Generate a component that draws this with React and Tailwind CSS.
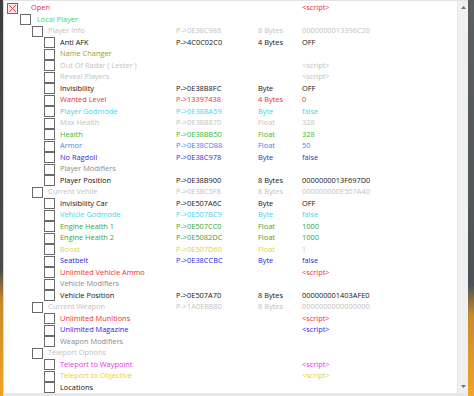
const RED = '#ee2b36'
const LIME = '#3fdc3f'
const FADE = '#c2c2c2'
const OLIVE = '#9c9c2a'
const CYAN = '#3fd6ee'
const GREEN = '#3ab83a'
const SKY = '#3a84ee'
const INDIGO = '#2f2fd0'
const MOD = '#8a8a8a'
const ENGINE = '#37a437'
const YELLOW = '#dcd43c'
const BLUE = '#2626e6'
const PINK = '#ee2cee'
const BLACK = '#141414'

// [level, label, color, address, type, value]
const rows = [
  [0, 'Open', RED, '', '', '<script>'],
  [1, 'Local Player', LIME],
  [2, 'Player Info', FADE, 'P->0E38C988', '8 Bytes', '0000000013396C20'],
  [3, 'Anti AFK', BLACK, 'P->4C0C02C0', '4 Bytes', 'OFF'],
  [3, 'Name Changer', OLIVE],
  [3, 'Out Of Radar ( Lester )', FADE, '', '', '<script>'],
  [3, 'Reveal Players', FADE, '', '', '<script>'],
  [3, 'Invisibility', BLACK, 'P->0E38B8FC', 'Byte', 'OFF'],
  [3, 'Wanted Level', RED, 'P->13397438', '4 Bytes', '0'],
  [3, 'Player Godmode', CYAN, 'P->0E38BA59', 'Byte', 'false'],
  [3, 'Max Health', FADE, 'P->0E38B870', 'Float', '328'],
  [3, 'Health', GREEN, 'P->0E38BB50', 'Float', '328'],
  [3, 'Armor', SKY, 'P->0E38CD88', 'Float', '50'],
  [3, 'No Ragdoll', INDIGO, 'P->0E38C978', 'Byte', 'false'],
  [3, 'Player Modifiers', MOD],
  [3, 'Player Position', BLACK, 'P->0E38B900', '8 Bytes', '0000000013F697D0'],
  [2, 'Current Vehile', FADE, 'P->0E38C5F8', '8 Bytes', '000000000E507A40'],
  [3, 'Invisibility Car', BLACK, 'P->0E507A6C', 'Byte', 'OFF'],
  [3, 'Vehicle Godmode', CYAN, 'P->0E507BC9', 'Byte', 'false'],
  [3, 'Engine Health 1', ENGINE, 'P->0E507CC0', 'Float', '1000'],
  [3, 'Engine Health 2', ENGINE, 'P->0E5082DC', 'Float', '1000'],
  [3, 'Boost', YELLOW, 'P->0E507D60', 'Float', '1'],
  [3, 'Seatbelt', BLUE, 'P->0E38CCBC', 'Byte', 'false'],
  [3, 'Unlimited Vehicle Ammo', RED, '', '', '<script>'],
  [3, 'Vehicle Modifiers', MOD],
  [3, 'Vehicle Position', BLACK, 'P->0E507A70', '8 Bytes', '000000001403AFE0'],
  [2, 'Current Weapon', FADE, 'P->1A0EB880', '8 Bytes', '0000000000000000'],
  [3, 'Unlimited Munitions', RED, '', '', '<script>'],
  [3, 'Unlimited Magazine', BLUE, '', '', '<script>'],
  [3, 'Weapon Modifiers', MOD],
  [2, 'Teleport Options', FADE],
  [3, 'Teleport to Waypoint', PINK, '', '', '<script>'],
  [3, 'Teleport to Objective', YELLOW, '', '', '<script>'],
  [3, 'Locations', BLACK],
]

const boxLeft = ['pl-[3px]', 'pl-[16px]', 'pl-[28px]', 'pl-[40px]']
const textGap = ['w-[13px]', 'w-[6px]', 'w-[5px]', 'w-[5px]']

function Box({ crossed }) {
  if (crossed) {
    return (
      <svg width="11" height="11" viewBox="0 0 11 11" className="shrink-0">
        <rect x="0.5" y="0.5" width="10" height="10" fill="#fbeaea" stroke="#6a6a6a" />
        <path d="M2 2 L9 9 M9 2 L2 9" stroke="#e0434c" strokeWidth="1" />
      </svg>
    )
  }
  return <div className="h-[11px] w-[11px] shrink-0 border border-[#6a6a6a] bg-white" />
}

function Row({ row }) {
  const [level, label, color, addr = '', type = '', value = ''] = row
  return (
    <div className="flex h-[11.5px] items-center whitespace-nowrap" style={{ color }}>
      <div className={`flex w-[172px] items-center ${boxLeft[level]}`}>
        <Box crossed={level === 0} />
        <div className={textGap[level]} />
        <span>{label}</span>
      </div>
      <div className="w-[82px]">{addr}</div>
      <div className="w-[44px]">{type}</div>
      <div>{value}</div>
    </div>
  )
}

export default function App() {
  return (
    <div className="flex h-[396px] w-[474px] overflow-hidden bg-white font-['Open_Sans',sans-serif] text-[7.4px] font-medium leading-none">
      <div className="w-[3px] bg-[linear-gradient(to_bottom,#3e3e3e_0%,#4a4a4a_68%,#c78a2a_76%,#f1a326_100%)]" />
      <div className="flex flex-1 flex-col">
        <div className="h-[2px] bg-[#e4e4e4]" />
        <div className="flex flex-1">
          <div className="flex-1 border-l border-[#d8d8d8] bg-white pt-[1px]">
            {rows.map((r) => (
              <Row key={r[1]} row={r} />
            ))}
          </div>
          <div className="flex w-[11px] flex-col items-center justify-between border-l border-[#e6e6e6] bg-[#f0f0f0] py-[5px]">
            <svg width="5" height="3" viewBox="0 0 5 3">
              <path d="M0 3 L2.5 0 L5 3 Z" fill="#707070" />
            </svg>
            <svg width="5" height="3" viewBox="0 0 5 3">
              <path d="M0 0 L2.5 3 L5 0 Z" fill="#707070" />
            </svg>
          </div>
        </div>
        <div className="h-[4px] bg-[#e8e8e8]" />
      </div>
      <div className="w-[6px] bg-[linear-gradient(to_bottom,#5a5f64_0%,#4e5256_72%,#c98c2c_80%,#f0a428_100%)]" />
    </div>
  )
}
